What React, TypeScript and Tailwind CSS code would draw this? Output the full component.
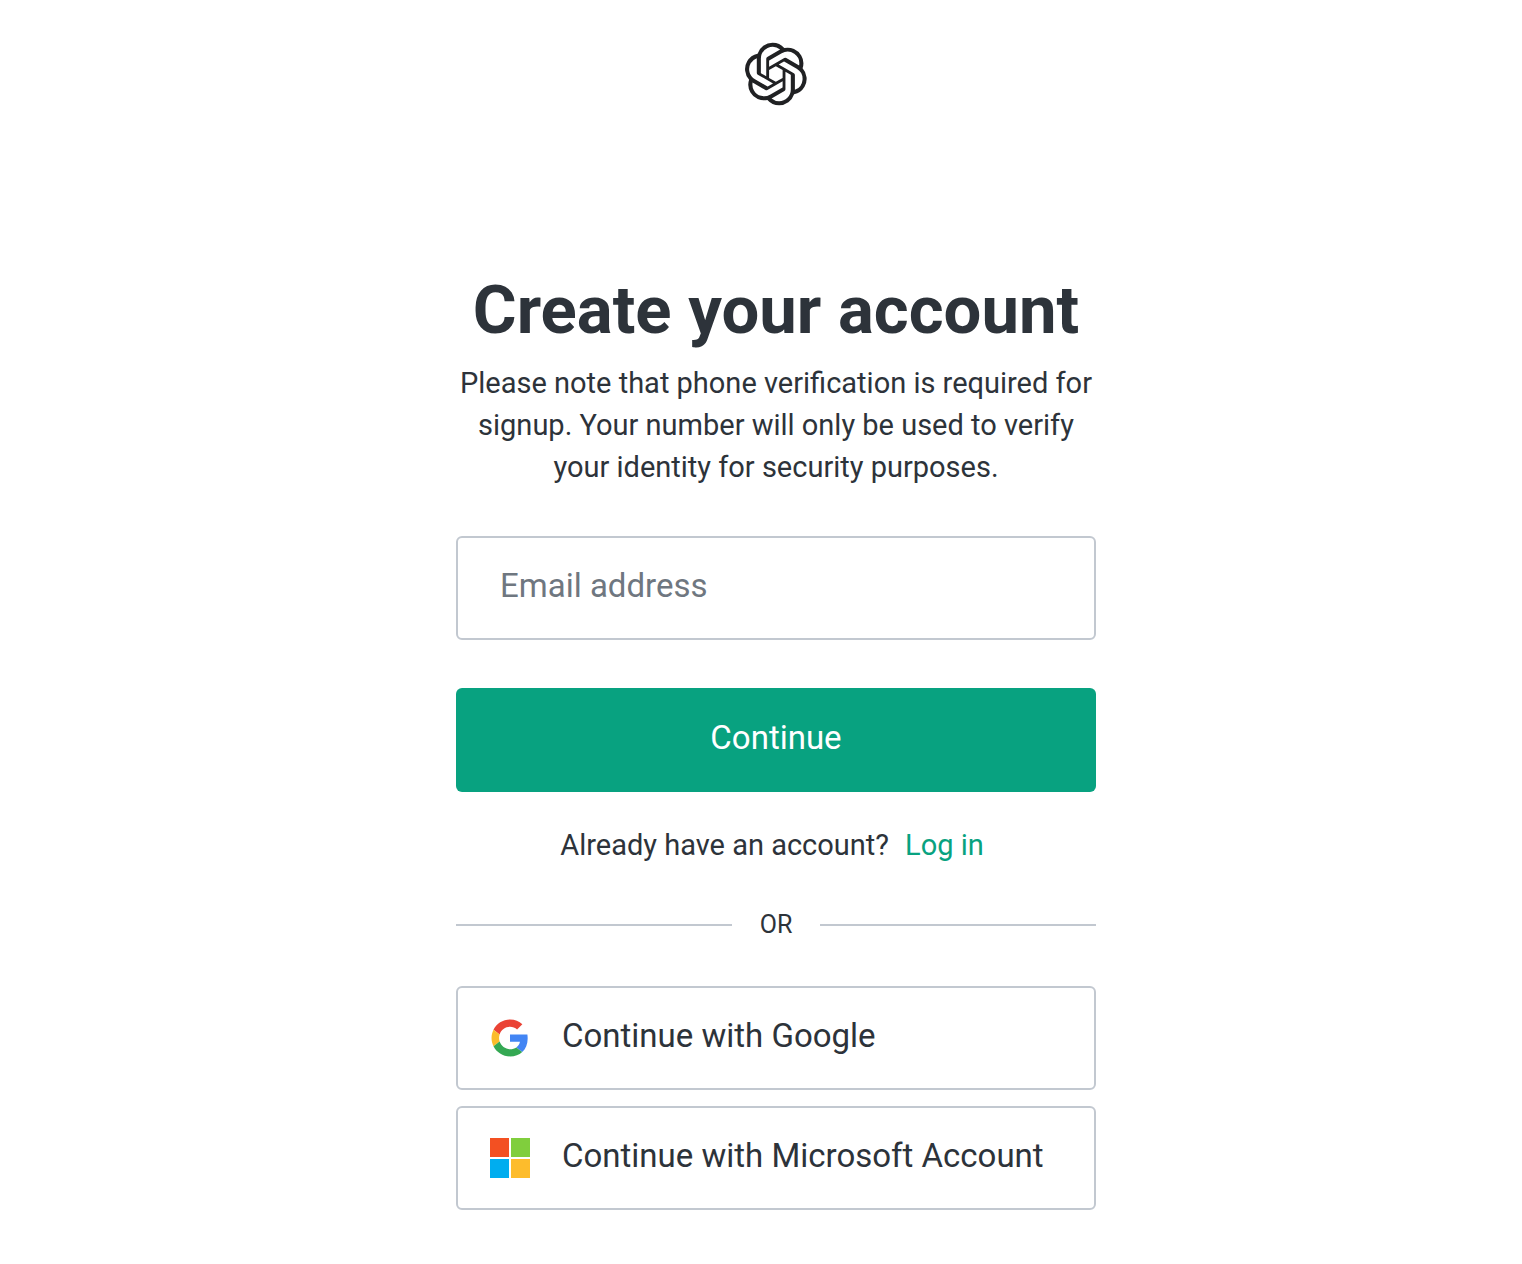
import { useState } from 'react';
import type { ReactNode } from 'react';

const Logo = () => (
    <svg className="size-16" viewBox="0 0 41 41" fill="none" role="img" aria-label="OpenAI">
        <path
            fill="#202123"
            d="M37.532 16.87a9.963 9.963 0 0 0-.856-8.184 10.078 10.078 0 0 0-10.855-4.835A9.964 9.964 0 0 0 18.306.5a10.079 10.079 0 0 0-9.614 6.977 9.967 9.967 0 0 0-6.664 4.834 10.08 10.08 0 0 0 1.24 11.817 9.965 9.965 0 0 0 .856 8.185 10.079 10.079 0 0 0 10.855 4.835 9.965 9.965 0 0 0 7.516 3.35 10.078 10.078 0 0 0 9.617-6.981 9.967 9.967 0 0 0 6.663-4.834 10.079 10.079 0 0 0-1.243-11.813ZM22.498 37.886a7.474 7.474 0 0 1-4.799-1.735c.061-.033.168-.091.237-.134l7.964-4.6a1.294 1.294 0 0 0 .655-1.134V19.054l3.366 1.944a.12.12 0 0 1 .066.092v9.299a7.505 7.505 0 0 1-7.49 7.496ZM6.392 31.006a7.471 7.471 0 0 1-.894-5.023c.06.036.162.099.237.141l7.964 4.6a1.297 1.297 0 0 0 1.308 0l9.724-5.614v3.888a.12.12 0 0 1-.048.103l-8.051 4.649a7.504 7.504 0 0 1-10.24-2.744ZM4.297 13.62A7.469 7.469 0 0 1 8.2 10.333c0 .068-.004.19-.004.274v9.201a1.294 1.294 0 0 0 .654 1.132l9.723 5.614-3.366 1.944a.12.12 0 0 1-.114.01L7.04 23.856a7.504 7.504 0 0 1-2.743-10.237Zm27.658 6.437-9.724-5.615 3.367-1.943a.121.121 0 0 1 .113-.01l8.052 4.648a7.498 7.498 0 0 1-1.158 13.528v-9.476a1.293 1.293 0 0 0-.65-1.132Zm3.35-5.043c-.059-.037-.162-.099-.236-.141l-7.965-4.6a1.298 1.298 0 0 0-1.308 0l-9.723 5.614v-3.888a.12.12 0 0 1 .048-.103l8.05-4.645a7.497 7.497 0 0 1 11.135 7.763Zm-21.063 6.929-3.367-1.944a.12.12 0 0 1-.065-.092v-9.299a7.497 7.497 0 0 1 12.293-5.756 6.94 6.94 0 0 0-.236.134l-7.965 4.6a1.294 1.294 0 0 0-.654 1.132l-.006 11.225Zm1.829-3.943 4.33-2.501 4.332 2.5v5l-4.331 2.5-4.331-2.5V18Z"
        />
    </svg>
);

const GoogleIcon = () => (
    <svg className="size-10" viewBox="-2 -2 52 52" aria-hidden="true">
        <path fill="#EA4335" d="M24 9.5c3.54 0 6.71 1.22 9.21 3.6l6.85-6.85C35.9 2.38 30.47 0 24 0 14.62 0 6.51 5.38 2.56 13.22l7.98 6.19C12.43 13.72 17.74 9.5 24 9.5z" />
        <path fill="#4285F4" d="M46.98 24.55c0-1.57-.15-3.09-.38-4.95H24v9.42h12.94c-.58 2.96-2.26 5.48-4.78 7.18l7.73 6c4.51-4.18 7.09-10.36 7.09-17.65z" />
        <path fill="#FBBC2A" d="M10.53 28.59c-.48-1.45-.76-2.99-.76-4.59s.27-3.14.76-4.59l-7.98-6.19C.92 16.46 0 20.12 0 24c0 3.88.92 7.54 2.56 10.78l7.97-6.19z" />
        <path fill="#34A853" d="M24 48c6.48 0 11.93-2.13 15.89-5.81l-7.73-6c-2.15 1.45-4.92 2.3-8.16 2.3-6.26 0-11.57-4.22-13.47-9.91l-7.98 6.19C6.51 42.62 14.62 48 24 48z" />
    </svg>
);

const MicrosoftIcon = () => (
    <svg className="size-10" viewBox="0 0 40 40" aria-hidden="true">
        <path fill="#F35022" d="M0 0h19v19H0z" />
        <path fill="#80CE3D" d="M21 0h19v19H21z" />
        <path fill="#00ADEF" d="M0 21h19v19H0z" />
        <path fill="#FDBC2C" d="M21 21h19v19H21z" />
    </svg>
);

const SocialButton = ({ icon, children }: { icon: ReactNode; children: ReactNode }) => (
    <button
        type="button"
        className="flex h-[104px] w-full cursor-pointer items-center gap-8 rounded-md border-2 border-[#c2c8d0] px-8 text-left text-[33px] hover:bg-gray-50"
    >
        <span className="shrink-0">{icon}</span>
        <span className="pb-1 whitespace-nowrap">{children}</span>
    </button>
);

const App = () => {
    const [email, setEmail] = useState('');

    return (
        <div className="flex min-h-screen flex-col items-center bg-white pt-[42px] pb-10 pl-[30px] font-[Roboto,sans-serif] text-[#2d333a]">
            <header>
                <Logo />
            </header>

            <main className="mt-40 w-full max-w-[640px]">
                <h1 className="text-center text-[67px] leading-[88px] font-bold">Create your account</h1>
                <p className="mt-2 text-center text-[29px] leading-[42px]">
                    Please note that phone verification is required for signup. Your number will only be used to
                    verify your identity for security purposes.
                </p>

                <form className="mt-12" onSubmit={(e) => e.preventDefault()}>
                    <input
                        type="email"
                        aria-label="Email address"
                        placeholder="Email address"
                        value={email}
                        onChange={(e) => setEmail(e.target.value)}
                        className="h-[104px] w-full rounded-md border-2 border-[#c2c8d0] px-[42px] pb-1.5 text-[33px] outline-none placeholder:text-[#6f7780] focus:border-[#08a280]"
                    />
                    <button
                        type="submit"
                        className="mt-12 h-[104px] w-full cursor-pointer rounded-md bg-[#08a280] pb-1 text-[33px] text-white"
                    >
                        Continue
                    </button>
                </form>

                <p className="mt-8 flex justify-center gap-4 pr-2 text-[29px] leading-[42px]">
                    Already have an account?
                    <a href="#" className="text-[#08a280]">Log in</a>
                </p>

                <div className="mt-10 flex items-center text-[25px] leading-[38px]">
                    <span className="h-0.5 flex-1 bg-[#c2c8d0]" />
                    <span className="w-[88px] text-center">OR</span>
                    <span className="h-0.5 flex-1 bg-[#c2c8d0]" />
                </div>

                <div className="mt-[42px] flex flex-col gap-4">
                    <SocialButton icon={<GoogleIcon />}>Continue with Google</SocialButton>
                    <SocialButton icon={<MicrosoftIcon />}>Continue with Microsoft Account</SocialButton>
                </div>
            </main>
        </div>
    );
};

export default App;
